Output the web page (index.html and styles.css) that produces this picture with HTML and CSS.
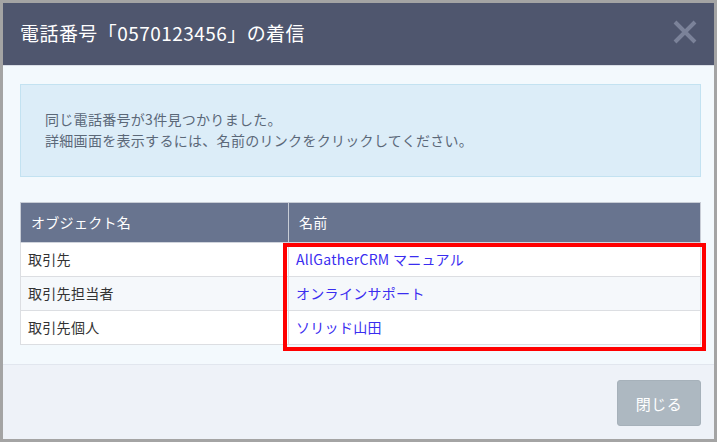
FILE: index.html
```html
<!DOCTYPE html>
<html lang="ja">
<head>
<meta charset="utf-8">
<link rel="stylesheet" href="styles.css">
</head>
<body>
<div class="dialog">
  <div class="header">
    <div class="title">電話番号「0570123456」の着信</div>
    <svg class="close" width="24" height="24" viewBox="0 0 24 24">
      <path d="M2 2 L22 22 M22 2 L2 22" stroke="#7b8299" stroke-width="4" fill="none"/>
    </svg>
  </div>
  <div class="content">
    <div class="info">
      <p>同じ電話番号が3件見つかりました。</p>
      <p>詳細画面を表示するには、名前のリンクをクリックしてください。</p>
    </div>
    <div class="table-wrap">
      <table class="results">
        <thead>
          <tr><th class="col-obj">オブジェクト名</th><th>名前</th></tr>
        </thead>
        <tbody>
          <tr><td>取引先</td><td><a href="#">AllGatherCRM マニュアル</a></td></tr>
          <tr class="alt"><td>取引先担当者</td><td><a href="#">オンラインサポート</a></td></tr>
          <tr><td>取引先個人</td><td><a href="#">ソリッド山田</a></td></tr>
        </tbody>
      </table>
      <div class="highlight"></div>
    </div>
  </div>
  <div class="footer">
    <button class="btn-close">閉じる</button>
  </div>
</div>
</body>
</html>
```

FILE: styles.css
```css
html, body {
  margin: 0;
  padding: 0;
}
body {
  background: #a4a4a4;
  font-family: "Noto Sans CJK JP", "Noto Sans", sans-serif;
  letter-spacing: 0.3px;
  width: 717px;
  height: 442px;
  padding: 3px;
  box-sizing: border-box;
}
.dialog {
  width: 711px;
  height: 436px;
  background: #f3f9fd;
  display: flex;
  flex-direction: column;
}
.header {
  height: 62px;
  flex: none;
  background: #4f566e;
  border-bottom: 1px solid #d9dee6;
  box-sizing: content-box;
  display: flex;
  align-items: center;
  justify-content: space-between;
  padding: 0 17px 0 17px;
}
.title {
  color: #ffffff;
  font-size: 19px;
  letter-spacing: 0.45px;
  line-height: 24px;
  margin-top: -3px;
}
.close {
  display: block;
  margin-top: -4px;
  margin-right: 0;
}
.content {
  flex: 1;
  padding: 18px 13px 0 17px;
}
.info {
  height: 93px;
  box-sizing: border-box;
  background: #dcedf8;
  border: 1px solid #c3e2f1;
  padding: 24px 24px;
  color: #5b6878;
  font-size: 14px;
  line-height: 21px;
}
.info p {
  margin: 0;
}
.table-wrap {
  position: relative;
  margin-top: 25px;
}
.results {
  width: 681px;
  border-collapse: collapse;
  font-size: 14px;
  background: #ffffff;
}
.results th {
  background: #68748f;
  color: #ffffff;
  font-weight: normal;
  text-align: left;
  height: 40px;
  box-sizing: border-box;
  padding: 0 10px 2px 10px;
  border: 1px solid #c8cdd6;
  border-bottom-color: #d0d4dc;
}
.results .col-obj {
  width: 268px;
}
.results td {
  height: 34px;
  box-sizing: border-box;
  padding: 0 7px 1px 7px;
  border: 1px solid #dcdee2;
  color: #333333;
}
.results tr.alt td {
  background: #f5f8fb;
}
.results a {
  color: #3a2df0;
  text-decoration: none;
}
.highlight {
  position: absolute;
  left: 263px;
  top: 41px;
  width: 423px;
  height: 108px;
  box-sizing: border-box;
  border: 4px solid #ff0000;
}
.footer {
  height: 75px;
  flex: none;
  background: #eef2f8;
  border-top: 1px solid #e1e6ee;
  display: flex;
  justify-content: flex-end;
  align-items: flex-start;
  padding: 15px 13px 0 0;
  box-sizing: border-box;
}
.btn-close {
  width: 84px;
  height: 46px;
  background: #adb8c1;
  border: 1px solid #a6b1ba;
  border-radius: 3px;
  color: #ffffff;
  font-family: "Noto Sans CJK JP", "Noto Sans", sans-serif;
  font-size: 15px;
  letter-spacing: 0.5px;
  padding: 0;
}
```
